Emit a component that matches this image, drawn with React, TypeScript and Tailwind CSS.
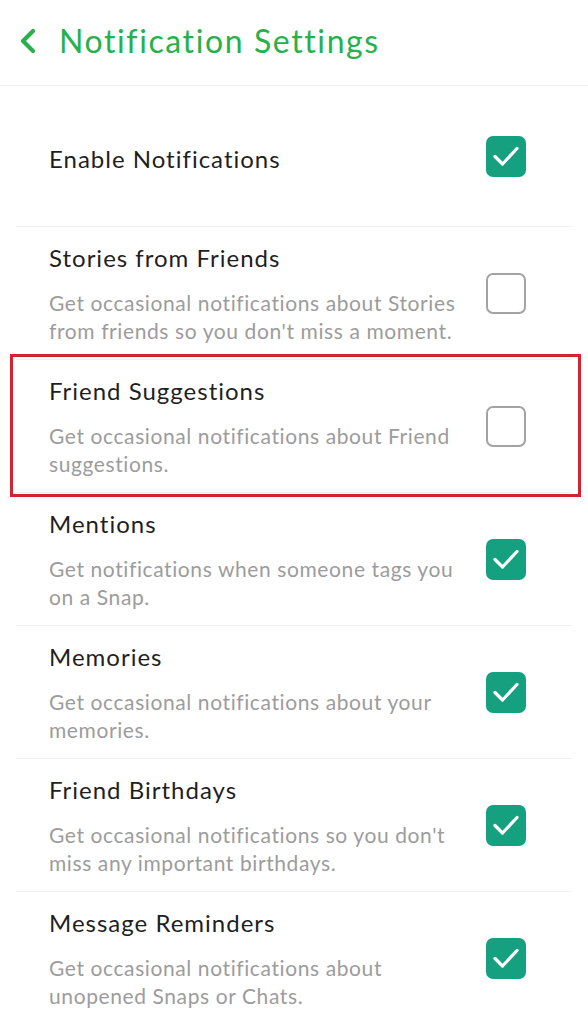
import { useState } from "react";

type Item = { title: string; desc?: string; on: boolean };

const items: Item[] = [
  { title: "Stories from Friends", desc: "Get occasional notifications about Stories from friends so you don't miss a moment.", on: false },
  { title: "Friend Suggestions", desc: "Get occasional notifications about Friend suggestions.", on: false },
  { title: "Mentions", desc: "Get notifications when someone tags you on a Snap.", on: true },
  { title: "Memories", desc: "Get occasional notifications about your memories.", on: true },
  { title: "Friend Birthdays", desc: "Get occasional notifications so you don't miss any important birthdays.", on: true },
  { title: "Message Reminders", desc: "Get occasional notifications about unopened Snaps or Chats.", on: true },
];

function Check({ on, onClick }: { on: boolean; onClick: () => void }) {
  if (on) {
    return (
      <button onClick={onClick} className="w-[40px] h-[41px] shrink-0 rounded-[7px] bg-[#15a180] flex items-center justify-center">
        <svg width="28" height="22" viewBox="0 0 28 22" fill="none">
          <path d="M3 11.5 L10.5 19 L25 3.5" stroke="white" strokeWidth="3.2" strokeLinecap="round" strokeLinejoin="round" />
        </svg>
      </button>
    );
  }
  return <button onClick={onClick} className="w-[40px] h-[41px] shrink-0 rounded-[7px] border-2 border-[#a3a3a3] bg-white" />;
}

export default function App() {
  const [enabled, setEnabled] = useState(true);
  const [state, setState] = useState(items.map((i) => i.on));

  return (
    <div className="w-[588px] h-[1024px] overflow-hidden bg-white relative" style={{ fontFamily: "Lato, 'Noto Sans', sans-serif" }}>
      <div className="h-[86px] flex items-center border-b border-[#f2f2f2]">
        <svg className="ml-[19px] mt-[-3px]" width="18" height="26" viewBox="0 0 18 26" fill="none">
          <path d="M14 3 L4 13 L14 23" stroke="#27b14b" strokeWidth="4.2" strokeLinecap="round" strokeLinejoin="round" />
        </svg>
        <h1 className="ml-[22px] mt-[-4px] text-[32px] text-[#27b14b] tracking-[1.6px]">Notification Settings</h1>
      </div>

      <div className="mx-[16px] h-[140px] flex items-center justify-between pl-[33px] pr-[46px]">
        <span className="text-[24px] tracking-[1px] text-[#1f1f1f] mt-[6px]">Enable Notifications</span>
        <Check on={enabled} onClick={() => setEnabled(!enabled)} />
      </div>

      {items.map((it, i) => (
        <div key={it.title} className="mx-[16px] border-t border-[#f0f0f0] h-[133px] flex items-center justify-between pl-[33px] pr-[46px]">
          <div className="w-[420px] self-start pt-[16px]">
            <div className="text-[24px] leading-[30px] tracking-[1px] text-[#1f1f1f]">{it.title}</div>
            <div className="mt-[16px] text-[21px] leading-[28px] tracking-[0.6px] text-[#9c9c9c]">{it.desc}</div>
          </div>
          <Check on={state[i]} onClick={() => setState(state.map((v, j) => (j === i ? !v : v)))} />
        </div>
      ))}

      <div className="absolute left-[10px] top-[354px] w-[571px] h-[143px] border-[3px] border-[#d42232] pointer-events-none" />
    </div>
  );
}
